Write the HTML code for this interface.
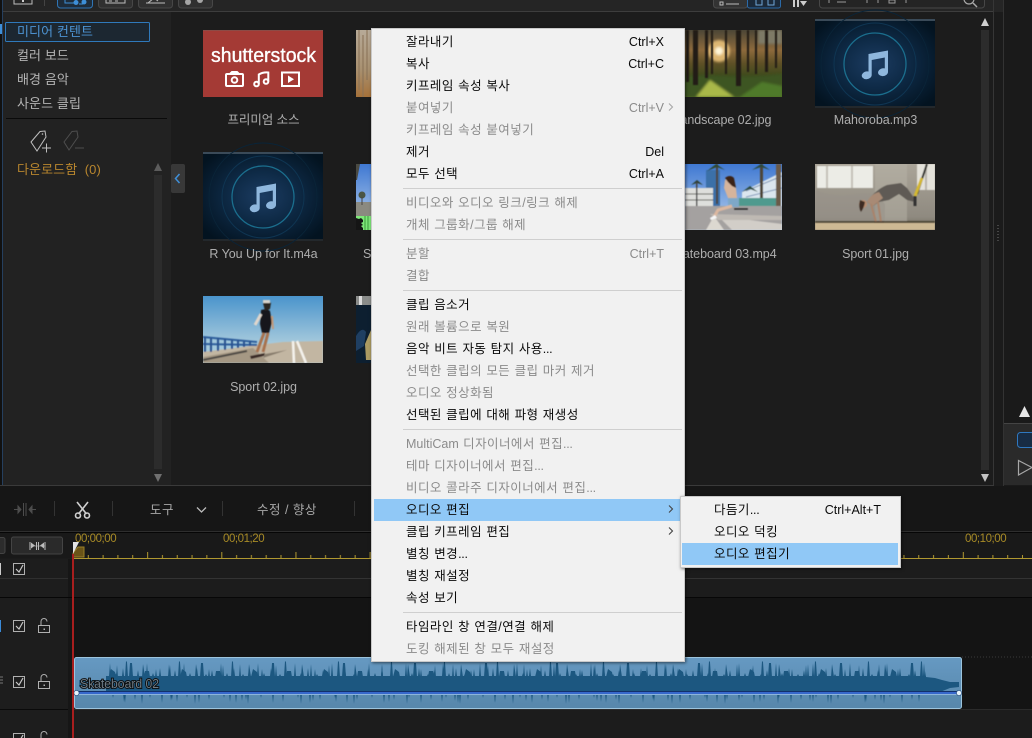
<!DOCTYPE html>
<html lang="ko"><head><meta charset="utf-8"><title>Editor</title>
<style>
html,body{margin:0;padding:0;background:#1b1b1b}
#p{position:relative;width:1032px;height:738px;overflow:hidden;font-family:"Liberation Sans","Noto Sans CJK KR",sans-serif}
svg.bg{position:absolute;left:0;top:0}
.t{position:absolute;white-space:nowrap;line-height:22px;height:22px}
.s{font-size:13px;color:#b4b4b4;left:17px;letter-spacing:.1px}
.l{font-size:12.5px;color:#aeaeae;text-align:center;width:153px;letter-spacing:-.05px}
.tl{font-size:12.5px;color:#a8a8a8;letter-spacing:.5px}
.ru{font-size:11.5px;color:#a88b26;letter-spacing:-.45px}
#menu{position:absolute;left:371px;top:28px;width:314px;height:634px;background:#f1f1f1;border:1px solid #c9c9c9;box-sizing:border-box;box-shadow:1px 1px 3px rgba(0,0,0,.55)}
#sub{position:absolute;left:680px;top:496px;width:221px;height:72px;background:#f1f1f1;border:1px solid #c9c9c9;box-sizing:border-box;box-shadow:1px 1px 3px rgba(0,0,0,.5)}
.m{position:absolute;left:371px;width:314px;height:22px;line-height:22px;font-size:12.5px;color:#0a0a0a;white-space:nowrap;letter-spacing:.45px;word-spacing:.4px}
.m span.a{position:absolute;left:35px}
.m span.b{position:absolute;right:21px;letter-spacing:0;word-spacing:0;font-size:12.5px}
.m i{font-style:normal;letter-spacing:-.3px}
.m i.n{letter-spacing:0}
.d{color:#8b8b8b}
.sep{position:absolute;left:403px;width:279px;height:1px;background:#cfcfcf}
.hl{position:absolute;background:#90c8f6}
.ar{position:absolute;left:667px;width:8px;height:22px}
</style></head><body><div id="p">
<svg class="bg" width="1032" height="738" viewBox="0 0 1032 738" xmlns="http://www.w3.org/2000/svg">
<defs>
<radialGradient id="mg" cx="50%" cy="50%" r="62%"><stop offset="0" stop-color="#1c3c62"/><stop offset=".45" stop-color="#0e2a46"/><stop offset="1" stop-color="#031320"/></radialGradient>
<linearGradient id="sky" x1="0" y1="0" x2="0" y2="1"><stop offset="0" stop-color="#4a94cc"/><stop offset=".7" stop-color="#a5c9dc"/></linearGradient>
<linearGradient id="sky2" x1="0" y1="0" x2="0" y2="1"><stop offset="0" stop-color="#3f78d2"/><stop offset="1" stop-color="#bcd4ee"/></linearGradient>
<linearGradient id="for" x1="0" y1="0" x2="0" y2="1"><stop offset="0" stop-color="#4c4636"/><stop offset=".3" stop-color="#8d6a3c"/><stop offset=".5" stop-color="#5e5026"/><stop offset=".7" stop-color="#3c4a1c"/><stop offset="1" stop-color="#4f6a22"/></linearGradient>
<linearGradient id="wood" x1="0" y1="0" x2="0" y2="1"><stop offset="0" stop-color="#b7aa98"/><stop offset=".6" stop-color="#a8906f"/><stop offset="1" stop-color="#a5713a"/></linearGradient>
<linearGradient id="wall" x1="0" y1="0" x2="0" y2="1"><stop offset="0" stop-color="#aaa498"/><stop offset=".8" stop-color="#8f8a80"/><stop offset="1" stop-color="#6c665a"/></linearGradient>
<linearGradient id="clip" x1="0" y1="0" x2="0" y2="1"><stop offset="0" stop-color="#6699c2"/><stop offset="1" stop-color="#5787ab"/></linearGradient>
<filter id="bl" x="-5%" y="-5%" width="110%" height="110%"><feGaussianBlur stdDeviation=".5"/></filter>
<filter id="bl2" x="-5%" y="-5%" width="110%" height="110%"><feGaussianBlur stdDeviation="1.2"/></filter>
<g id="note"><path d="M-6.500 -11 L13 -14.500 V7 A5 3.900 -10 1 1 9.800 3.400 V-7.500 L-3.300 -5 V10 A5 3.900 -10 1 1 -6.500 6.500 Z" fill="#8fb7dd"/></g>
<g id="music"><rect width="120" height="89" fill="url(#mg)"/><rect width="120" height="2" fill="#3a4a58"/><rect y="87" width="120" height="2" fill="#23282c"/>
<circle cx="60" cy="45" r="31" fill="none" stroke="#1b6f8e" stroke-width="1.300"/><circle cx="60" cy="45" r="41" fill="none" stroke="#0f3552" stroke-width="1"/><circle cx="60" cy="45" r="54" fill="none" stroke="#0a2438" stroke-width="1"/>
<use href="#note" x="60" y="46"/></g>
<pattern id="tick" x="73" y="552" width="74.15" height="7" patternUnits="userSpaceOnUse"><g fill="#b09830"><rect x="0" y="0" width="1" height="7"/><rect x="14.800" y="3" width="1" height="4"/><rect x="29.600" y="3" width="1" height="4"/><rect x="44.400" y="3" width="1" height="4"/><rect x="59.200" y="3" width="1" height="4"/></g></pattern>
<pattern id="w1" x="106" y="655" width="37" height="55" patternUnits="userSpaceOnUse"><path d="M0 21H3L4 8 5 21H9L10 18 11 21H16L17 13 18 21H25L26 19 27 21H31L32 15 33 21H37V38H30L29 45 28 38H20L19 48 18 38H8L7 43 6 38H0Z" fill="#1c5780"/></pattern>
<pattern id="w2" x="111" y="655" width="53" height="55" patternUnits="userSpaceOnUse"><path d="M5 22L6 10 7 22ZM14 22L15 6 16 7 17 22ZM31 22L32 9 34 22ZM44 22L45 14 46 22ZM12 38L13 47 14 38ZM30 38L31 49 32 38Z" fill="#1c5780"/></pattern>
<pattern id="w3" x="120" y="655" width="71" height="55" patternUnits="userSpaceOnUse"><path d="M9 22L10 8 12 8 13 22ZM24 22L25 16 29 16 30 22ZM48 22L49 9 50 22ZM60 22L62 14 66 17 67 22ZM50 38L51 46 52 38Z" fill="#1c5780"/></pattern>
</defs>

<rect width="1032" height="738" fill="#1b1b1b"/>
<!-- top bar -->
<rect width="1032" height="12" fill="#252525"/>
<rect y="11" width="994" height="1" fill="#3d3d3d"/>
<rect x="3" y="12" width="168" height="473" fill="#222"/>
<rect x="171" y="12" width="822" height="473" fill="#1c1c1c"/>
<rect x="0" y="0" width="2" height="486" fill="#111"/><rect x="2" y="0" width="1" height="486" fill="#253f5e"/>
<rect x="0" y="24" width="2" height="10" fill="#3f8fd8"/>
<rect x="14" y="-3" width="18" height="7" fill="none" stroke="#bdbdbd"/><rect x="22" y="0" width="2" height="2" fill="#ccc"/>
<rect x="44" y="0" width="1" height="6" fill="#444"/>
<rect x="57.500" y="-5" width="35" height="13" rx="3" fill="#1e2c3a" stroke="#2f75b5"/>
<path d="M65-1V3H73M71 3h3M79 4h4" stroke="#3d8fd8" stroke-width="1" fill="none"/><circle cx="76" cy="2.500" r="2.500" fill="#3d8fd8"/><circle cx="84" cy="2" r="2.500" fill="#3d8fd8"/>
<rect x="98.500" y="-5" width="34" height="13" rx="3" fill="#303030" stroke="#474747"/><path d="M106 0V3H125V0M109 1h3M115 1h3" stroke="#bbb" fill="none"/>
<rect x="138.500" y="-5" width="34" height="13" rx="3" fill="#303030" stroke="#474747"/><path d="M146 3H165M148 3L154 -2 158 1" stroke="#bbb" fill="none"/>
<rect x="178.500" y="-5" width="34" height="13" rx="3" fill="#303030" stroke="#474747"/><circle cx="188" cy="2" r="3" fill="#a5a5a5"/><circle cx="200" cy="0" r="3" fill="#a5a5a5"/>
<rect x="713.500" y="-5" width="34" height="13" rx="3" fill="#333" stroke="#4a4a4a"/><path d="M720 2h3v3h-3zM726 4h13" stroke="#bbb" fill="none"/>
<rect x="747.500" y="-5" width="33" height="13" rx="2" fill="#1b2a3a" stroke="#2b6aa8"/><path d="M756-1V5H762V-1M768-1V5H774V-1" stroke="#6fa7d8" fill="none"/>
<path d="M793 -1h2v8h-2zM797 -1h2v8h-2z" fill="#ccc"/><path d="M800 1h7l-3.500 5z" fill="#ccc"/>
<rect x="819.500" y="-5" width="165" height="13" rx="3" fill="#242424" stroke="#474747"/>
<path d="M829 0V3M837 2H846M867 0v3M878 0v3M889 0h6v3h-6zM906 0v3" stroke="#999" fill="none"/>
<circle cx="969" cy="-1" r="5" fill="none" stroke="#aaa" stroke-width="1.200"/><path d="M973 3l4 4" stroke="#aaa" stroke-width="1.500"/>

<!-- sidebar -->
<rect x="5.500" y="22.500" width="144" height="19" rx="1" fill="#1c2731" stroke="#2f79bb"/>
<rect x="6" y="118" width="161" height="1" fill="#0a0a0a"/>
<path d="M31 142L40 131.500 45 131 46 137 37 151Z" fill="none" stroke="#c0c0c0" stroke-width="1"/><circle cx="42.500" cy="134" r=".8" fill="#c0c0c0"/><path d="M42 148H51M46.500 143.500V152.500" stroke="#c0c0c0"/>
<path d="M64 142L72 131.500 77 131 78 137 69 150Z" fill="none" stroke="#4e4e4e" stroke-width="1"/><path d="M75 148H84" stroke="#4e4e4e"/>
<rect x="154" y="175" width="8" height="294" fill="#2c2c2c"/>
<path d="M154 171L158 163 162 171Z" fill="#5c5c5c"/><path d="M154 474L158 482 162 474Z" fill="#707070"/>
<rect x="171" y="164" width="14" height="29" rx="2" fill="#383838"/><path d="M179.500 174L175.500 178.500 179.500 183" stroke="#3f8fd8" stroke-width="1.500" fill="none"/>

<!-- grid scrollbar -->
<rect x="981" y="30" width="8" height="440" fill="#2c2c2c"/>
<path d="M981 26L985 18 989 26Z" fill="#cfcfcf"/><path d="M981 474L985 482 989 474Z" fill="#c2c2c2"/>
<rect x="993" y="0" width="1" height="485" fill="#363636"/><rect x="0" y="485" width="994" height="1" fill="#3a3a3a"/>
<path d="M998 225v1M998 228v1M998 231v1M998 234v1M998 237v1M998 240v1" stroke="#555" stroke-width="1.500"/>
<rect x="1003" y="0" width="29" height="486" fill="#1a1a1a"/><rect x="1003" y="0" width="1" height="486" fill="#333"/>
<rect x="1004" y="423" width="28" height="62" fill="#2a2a2a"/><rect x="1004" y="423" width="28" height="1" fill="#444"/>
<path d="M1019 417L1024.500 406 1030 417Z" fill="#e6e6e6"/>
<rect x="1017.500" y="432.500" width="20" height="15" rx="3" fill="#182c44" stroke="#2f78c0"/>
<path d="M1018.500 460.500L1032 467.500 1018.500 475Z" fill="none" stroke="#a8a8a8" stroke-width="1.200"/>
<path d="M893 491v1M897 491v1M901 491v1M905 491v1M909 491v1" stroke="#555" stroke-width="1.500"/>

<!-- thumbnails -->
<svg x="203" y="30" width="120" height="67" viewBox="0 0 120 67"><rect width="120" height="67" fill="#a43a35"/><rect width="120" height="1" fill="#8c4b46"/>
<text x="8" y="32" font-family="Liberation Sans" font-size="20" fill="#fff" stroke="#fff" stroke-width=".35" textLength="105" lengthAdjust="spacingAndGlyphs">shutterstock</text>
<g fill="none" stroke="#fff" stroke-width="2"><rect x="23" y="44" width="17" height="12" rx="1"/><circle cx="31.500" cy="50" r="2.800"/><path d="M27 44l2-2h5l2 2"/>
<circle cx="53.500" cy="54" r="2.300"/><circle cx="63" cy="51.500" r="2.300"/><path d="M55.800 54V44.500Q60 42 65.300 42.500V51.500"/>
<rect x="79" y="42.500" width="17" height="13.500"/></g><path d="M85 45.500L91 49.200 85 53Z" fill="#fff"/></svg>

<use href="#music" x="203" y="152"/>
<use href="#music" x="815" y="19"/>

<svg x="356" y="30" width="15" height="67"><rect width="15" height="67" fill="url(#wood)"/><path d="M3 0V60M7 5V67M11 0V50" stroke="#8a7358" stroke-width="1.500" opacity=".7"/></svg>
<svg x="356" y="164" width="15" height="66"><rect width="15" height="66" fill="url(#sky2)"/><rect y="38" width="15" height="18" fill="#8b8a80"/><circle cx="6" cy="31" r="3.500" fill="#4a5544"/><rect x="5.500" y="33" width="1" height="8" fill="#444"/><path d="M0 0h4L1 16H0Z" fill="#4a4a42"/>
<rect y="52" width="15" height="14" fill="#7fe87a"/><path d="M0 54l3 1 2-1 2 2v2l-2 1 2 2-2 1 2 2v2H0Z" fill="#151515"/><path d="M9 52v14M12 52v14" stroke="#3a9a3a"/></svg>
<svg x="356" y="296" width="15" height="67"><rect width="15" height="67" fill="#0d1f30"/><rect width="15" height="9" fill="#8a8c8a"/><rect x="3" width="3" height="9" fill="#dcdcdc"/><path d="M15 34L9 48 10 64H15Z" fill="#ac9b62"/><path d="M0 40Q6 30 10 36L8 50 0 55Z" fill="#1f3f62"/></svg>

<!-- forest -->
<svg x="662" y="30" width="120" height="67" viewBox="0 0 120 67"><rect width="120" height="67" fill="url(#for)"/>
<g filter="url(#bl2)"><circle cx="57" cy="21" r="11" fill="#e8c078" opacity=".9"/><circle cx="57" cy="21" r="4" fill="#fff6d8"/><path d="M0 50Q30 44 60 46T120 44V67H0Z" fill="#3e5520"/><path d="M34 67L48 50 72 67Z" fill="#a9b84a"/><path d="M78 67L100 52 120 56V67Z" fill="#4f7a2c"/><rect x="96" y="0" width="24" height="14" fill="#7e7a66"/></g>
<g filter="url(#bl)" fill="#211a12"><rect x="31" y="0" width="5" height="55"/><rect x="43" y="0" width="3" height="48"/><rect x="49" y="0" width="2" height="44"/><rect x="63" y="0" width="2" height="44"/><rect x="74" y="0" width="5" height="56"/><rect x="85" y="0" width="2" height="42"/><rect x="93" y="0" width="2" height="44"/><rect x="103" y="0" width="3" height="42"/><rect x="113" y="0" width="2" height="38"/><rect x="24" y="0" width="3" height="52"/></g></svg>

<!-- skateboard 03 -->
<svg x="662" y="164" width="120" height="66" viewBox="0 0 120 66"><rect width="120" height="66" fill="url(#sky2)"/>
<g filter="url(#bl)"><path d="M80 28L120 8V42H80Z" fill="#dbe6ee"/><path d="M84 27L120 12M84 33L120 24" stroke="#8098b8"/><rect x="44" y="6" width="14" height="38" fill="#3b6fa8"/><rect x="23" y="24" width="28" height="20" fill="#dedfdc"/><path d="M23 30H51M23 36H51" stroke="#5a5a55"/>
<rect x="54" y="0" width="2" height="40" fill="#4e4438"/><path d="M45 7L54 0 63 6 55 3Z" fill="#2e4a34"/><path d="M29 21L35 16 41 21 35 19Z" fill="#2c4034"/><rect x="34" y="18" width="1.500" height="26" fill="#444"/>
<rect x="98" y="0" width="3" height="44" fill="#4e4438"/><path d="M80 28L88 22 96 28 88 25Z" fill="#2c4a3c"/><path d="M90 6L99 0 108 6 99 3Z" fill="#2c4a3c"/><path d="M76 34H114V42H76Z" fill="#4f9a8e"/><rect x="114" y="0" width="5" height="44" fill="#6b5a48"/>
<path d="M23 42H120V66H23Z" fill="#a4a1a0"/><path d="M56 52L120 60V66H70Z" fill="#d2cec8"/><path d="M48 50L120 52V56L56 56Z" fill="#beb9b3"/><path d="M44 66L52 52 62 66Z" fill="#dcd8d0"/>
<path d="M63 16Q68 13 71 18L74 24 75 34 66 34 62 24Z" fill="#d6b49c"/><path d="M63 14Q68 10 72 14L74 24 70 22 66 18Z" fill="#3a2418"/><rect x="66" y="34" width="11" height="9" fill="#7ea8c8"/><path d="M70 42L56 46 52 53" stroke="#dcb8a0" stroke-width="3" fill="none"/><path d="M48 54L53 51 55 54 49 56Z" fill="#f6f6f6"/><rect x="72" y="44" width="14" height="2" fill="#2c2c2c"/></g></svg>

<!-- sport 01 -->
<svg x="815" y="164" width="120" height="66" viewBox="0 0 120 66"><rect width="120" height="66" fill="url(#wall)"/>
<g filter="url(#bl)"><rect x="2" y="2" width="56" height="22" fill="#ecece6"/><path d="M12 2V24M37 2V24" stroke="#c4c0b6" stroke-width="2"/><rect x="102" y="0" width="18" height="26" fill="#e4e2da"/><path d="M111 0V26" stroke="#b8b4aa" stroke-width="2"/><rect x="60" y="0" width="32" height="58" fill="#b8b3a8" opacity=".5"/>
<path d="M0 26Q20 34 40 30T70 40V57H0Z" fill="#98928a" opacity=".6"/><rect y="58" width="120" height="8" fill="#cdb994"/><rect y="57" width="120" height="2" fill="#4e4636"/>
<path d="M52 38Q60 26 72 21L86 19 92 24 99 34 100 38 92 36 84 30 74 36 64 38 58 42Z" fill="#5f5a54"/><path d="M52 38Q56 30 64 28L68 34 58 42Z" fill="#a88a74"/><circle cx="48" cy="40" r="4" fill="#b88c70"/><path d="M45 36Q43 44 46 48 49 44 50 38Z" fill="#3e2c20"/><path d="M56 40L61 58M63 38L66 58" stroke="#a9836a" stroke-width="2" fill="none"/><path d="M59 58H69" stroke="#4a3a2c" stroke-width="1.500"/>
<path d="M112 0L102 30" stroke="#2c2c26" stroke-width="2"/><path d="M107 14L100 32" stroke="#d4b830" stroke-width="3"/><path d="M100 32L100 42" stroke="#333" stroke-width="3"/></g></svg>

<!-- sport 02 -->
<svg x="203" y="296" width="120" height="67" viewBox="0 0 120 67"><rect width="120" height="67" fill="url(#sky)"/>
<g filter="url(#bl)"><path d="M0 56L55 49 80 46 120 45V67H0Z" fill="#c2b6a2"/><path d="M0 67V61L50 52 66 67Z" fill="#a59884"/><path d="M0 64L44 55" stroke="#4e4a44" stroke-width="2"/>
<path d="M0 41L54 46M0 48L54 49" stroke="#2f5e9c" stroke-width="2"/><path d="M2 41V56M8 42V56M15 42V55M22 43V54M29 44V53M35 44V52M41 45V51M47 45V50" stroke="#2a5290" stroke-width="2"/>
<path d="M90 45L91 67M94 45L103 67" stroke="#f4f2ec" stroke-width="2.500"/>
<path d="M58 14Q64 12 67 15L69 26 66 37 59 37 57 28Z" fill="#12161c"/><path d="M60 7Q64 3 68 7L67 13 62 15Z" fill="#2a2622"/><rect x="60" y="4" width="7" height="3" fill="#d9d4cc"/><path d="M58 18L52 29" stroke="#e0d6cc" stroke-width="3"/><path d="M69 20L70 33" stroke="#c29a7c" stroke-width="2"/><path d="M61 37L54 56M65 37L60 56" stroke="#a8724e" stroke-width="3"/><path d="M47 60L62 57 61 60 48 63Z" fill="#3a2a26"/><path d="M62 58L84 54 60 62Z" fill="#6e6456" opacity=".7"/></g></svg>

<!-- timeline -->
<rect x="0" y="486" width="1032" height="45" fill="#161616"/>
<rect x="0" y="531" width="1032" height="1" fill="#2e2e2e"/><rect y="532" width="1032" height="1" fill="#060606"/>
<path d="M14 509.500h4M18 506l3 3.500-3 3.500zM36 509.500h-4M32 506l-3 3.500 3 3.500zM23.500 503v13M26 503v13" stroke="#4d4d4d" fill="#4d4d4d"/>
<g fill="#333"><rect x="54" y="501" width="1" height="15"/><rect x="112" y="501" width="1" height="15"/><rect x="222" y="501" width="1" height="15"/><rect x="354" y="501" width="1" height="15"/></g>
<g fill="none" stroke="#cfcfcf" stroke-width="1.600"><path d="M77 502L86.500 514M88 502L78.500 514"/><circle cx="78" cy="515.500" r="2.500"/><circle cx="87" cy="515.500" r="2.500"/></g>
<path d="M197 507.500L201.500 512 206 507.500" stroke="#bdbdbd" stroke-width="1.300" fill="none"/>
<rect y="533" width="1032" height="25" fill="#191919"/>
<rect x="-6" y="537.500" width="11" height="16" rx="2" fill="#2c2c2c" stroke="#444"/>
<rect x="11.500" y="537" width="51" height="17" rx="2" fill="#2a2a2a" stroke="#444"/>
<path d="M30 542v8M45 542v8M36.500 542v8M38.500 542v8" stroke="#bdbdbd"/><path d="M31 542.500l4 3-4 3zM44 542.500l-4 3 4 3z" fill="#bdbdbd"/><path d="M31 546h14" stroke="#bdbdbd" stroke-width=".6"/>
<rect x="73" y="552" width="959" height="7" fill="url(#tick)"/>
<rect x="73" y="558" width="959" height="1" fill="#b09830"/>
<path d="M73 557V553L78 547H84V557Z" fill="#6a5418" stroke="#9a7f28"/><path d="M73 542H79L73 554Z" fill="#e4e4e4"/>
<!-- track area -->
<rect x="0" y="559" width="1032" height="179" fill="#1a1a1a"/>
<rect x="0" y="559" width="68" height="179" fill="#1d1d1d"/>
<rect x="68" y="559" width="4" height="179" fill="#161616"/>
<rect x="73" y="559" width="959" height="38" fill="#1c1c1c"/>
<rect x="0" y="578" width="68" height="1" fill="#2f2f2f"/><rect x="73" y="578" width="959" height="1" fill="#333"/>
<rect x="0" y="597" width="1032" height="1" fill="#070707"/>
<rect x="73" y="598" width="959" height="111" fill="#141414"/>
<rect x="0" y="709" width="68" height="1" fill="#0a0a0a"/><rect x="73" y="710" width="959" height="28" fill="#1c1c1c"/><rect x="73" y="709" width="959" height="1" fill="#2b2b2b"/>
<rect x="0" y="563" width="1" height="12" fill="#ccc"/><rect x="0" y="620" width="1" height="12" fill="#3a8ad8"/>
<path d="M0 677h3M0 680h3M0 683h3" stroke="#777"/>
<g><rect x="13.500" y="563.500" width="11" height="11" fill="none" stroke="#b0b0b0"/><path d="M16 569l3 3 4-7" stroke="#c8c8c8" fill="none" stroke-width="1.200"/></g>
<g fill="none" stroke="#b0b0b0"><rect x="13.500" y="620.500" width="11" height="11"/><rect x="13.500" y="676.500" width="11" height="11"/><rect x="13.500" y="733.500" width="11" height="11"/>
<path d="M16 626l3 3 4-7M16 682l3 3 4-7M16 739l3 3 4-7" stroke="#c8c8c8" stroke-width="1.200"/>
<rect x="38.500" y="625.500" width="11" height="7"/><path d="M41 625.500v-4a3 3 0 0 1 6 0"/><rect x="38.500" y="681.500" width="11" height="7"/><path d="M41 681.500v-4a3 3 0 0 1 6 0"/><rect x="38.500" y="738.500" width="11" height="7"/><path d="M41 738.500v-4a3 3 0 0 1 6 0"/></g>
<rect x="43.500" y="628.500" width="1.500" height="1.500" fill="#b0b0b0"/><rect x="43.500" y="684.500" width="1.500" height="1.500" fill="#b0b0b0"/>
<path d="M962 657H1032" stroke="#3a3a3a" stroke-dasharray="1 2"/>
<!-- clip -->
<rect x="74.500" y="657.500" width="887" height="51" rx="2" fill="url(#clip)" stroke="#9cc4dd"/>
<rect x="79" y="680" width="28" height="7" fill="#1c5780" opacity=".7"/>
<rect x="106" y="677" width="820" height="16" fill="#1c5780"/>
<path d="M926 677L935 678 942 680 950 682 959 682 959 687 950 688 940 692 926 692Z" fill="#1c5780"/>
<rect x="106" y="655" width="820" height="55" fill="url(#w1)"/>
<rect x="106" y="655" width="820" height="55" fill="url(#w2)"/>
<rect x="106" y="655" width="820" height="55" fill="url(#w3)"/>
<rect x="76" y="692" width="883" height="2" fill="#3768cc"/><rect x="76" y="691" width="883" height="1" fill="#13306a"/><rect x="76" y="694" width="883" height="1" fill="#8db4da"/>
<circle cx="76.500" cy="693" r="2.600" fill="#e6f3fb" stroke="#2a4f80" stroke-width=".7"/><circle cx="959" cy="693" r="2.600" fill="#e6f3fb" stroke="#2a4f80" stroke-width=".7"/>
<rect x="72" y="554" width="2" height="184" fill="#a81e1e"/>
<text x="80" y="688" font-family="Liberation Sans" font-size="12.500" fill="#6f7c86" stroke="#0b0b0b" stroke-width="1.800" paint-order="stroke" textLength="79" lengthAdjust="spacingAndGlyphs">Skateboard 02</text>
</svg>

<!-- sidebar text -->
<div class="t s" style="top:21px;color:#4d93d2">미디어 컨텐트</div>
<div class="t s" style="top:45px">컬러 보드</div>
<div class="t s" style="top:69px">배경 음악</div>
<div class="t s" style="top:93px">사운드 클립</div>
<div class="t s" style="top:159px;color:#b8862e">다운로드함&nbsp; (0)</div>
<!-- labels -->
<div class="t l" style="left:187px;top:109px">프리미엄 소스</div>
<div class="t l" style="left:187px;top:243px">R You Up for It.m4a</div>
<div class="t l" style="left:187px;top:376px">Sport 02.jpg</div>
<div class="t l" style="left:799px;top:109px">Mahoroba.mp3</div>
<div class="t l" style="left:799px;top:243px">Sport 01.jpg</div>
<div class="t l" style="left:646px;top:109px">Landscape 02.jpg</div>
<div class="t l" style="left:646px;top:243px">Skateboard 03.mp4</div>
<div class="t l" style="left:363px;top:243px;width:20px;text-align:left">S</div>
<!-- toolbar -->
<div class="t tl" style="left:150px;top:499px">도구</div>
<div class="t tl" style="left:257px;top:499px">수정 / 향상</div>
<div class="t ru" style="left:75px;top:528px">00;00;00</div>
<div class="t ru" style="left:223px;top:528px">00;01;20</div>
<div class="t ru" style="left:965px;top:528px">00;10;00</div>

<!-- menu -->
<div id="menu"></div>
<div class="hl" style="left:374px;top:499px;width:308px;height:22px"></div>
<div class="sep" style="top:188px"></div><div class="sep" style="top:239px"></div><div class="sep" style="top:290px"></div><div class="sep" style="top:429px"></div><div class="sep" style="top:612px"></div>
<div class="m" style="top:31px"><span class="a">잘라내기</span><span class="b">Ctrl+X</span></div>
<div class="m" style="top:53px"><span class="a">복사</span><span class="b">Ctrl+C</span></div>
<div class="m" style="top:75px"><span class="a">키프레임 속성 복사</span></div>
<div class="m d" style="top:97px"><span class="a">붙여넣기</span><span class="b">Ctrl+V</span></div>
<div class="m d" style="top:119px"><span class="a">키프레임 속성 붙여넣기</span></div>
<div class="m" style="top:141px"><span class="a">제거</span><span class="b">Del</span></div>
<div class="m" style="top:163px"><span class="a">모두 선택</span><span class="b">Ctrl+A</span></div>
<div class="m d" style="top:192px"><span class="a">비디오와 오디오 링크/링크 해제</span></div>
<div class="m d" style="top:214px"><span class="a">개체 그룹화/그룹 해제</span></div>
<div class="m d" style="top:243px"><span class="a">분할</span><span class="b">Ctrl+T</span></div>
<div class="m d" style="top:265px"><span class="a">결합</span></div>
<div class="m" style="top:294px"><span class="a">클립 음소거</span></div>
<div class="m d" style="top:316px"><span class="a">원래 볼륨으로 복원</span></div>
<div class="m" style="top:338px"><span class="a">음악 비트 자동 탐지 사용<i>...</i></span></div>
<div class="m d" style="top:360px"><span class="a">선택한 클립의 모든 클립 마커 제거</span></div>
<div class="m d" style="top:382px"><span class="a">오디오 정상화됨</span></div>
<div class="m" style="top:404px"><span class="a">선택된 클립에 대해 파형 재생성</span></div>
<div class="m d" style="top:433px"><span class="a"><i class="n">MultiCam</i> 디자이너에서 편집<i>...</i></span></div>
<div class="m d" style="top:455px"><span class="a">테마 디자이너에서 편집<i>...</i></span></div>
<div class="m d" style="top:477px"><span class="a">비디오 콜라주 디자이너에서 편집<i>...</i></span></div>
<div class="m" style="top:499px"><span class="a">오디오 편집</span></div>
<div class="m" style="top:521px"><span class="a">클립 키프레임 편집</span></div>
<div class="m" style="top:543px"><span class="a">별칭 변경<i>...</i></span></div>
<div class="m" style="top:565px"><span class="a">별칭 재설정</span></div>
<div class="m" style="top:587px"><span class="a">속성 보기</span></div>
<div class="m" style="top:616px"><span class="a">타임라인 창 연결/연결 해제</span></div>
<div class="m d" style="top:638px"><span class="a">도킹 해제된 창 모두 재설정</span></div>
<svg class="ar" style="top:96px" viewBox="0 0 8 22"><path d="M2 7.500L5.500 11 2 14.500" fill="none" stroke="#a8a8a8" stroke-width="1.100"/></svg>
<svg class="ar" style="top:498px" viewBox="0 0 8 22"><path d="M2 7.500L5.500 11 2 14.500" fill="none" stroke="#444" stroke-width="1.100"/></svg>
<svg class="ar" style="top:520px" viewBox="0 0 8 22"><path d="M2 7.500L5.500 11 2 14.500" fill="none" stroke="#444" stroke-width="1.100"/></svg>
<!-- submenu -->
<div id="sub"></div>
<div class="hl" style="left:682px;top:543px;width:216px;height:22px"></div>
<div class="m" style="left:679px;top:499px;width:222px"><span class="a">다듬기<i>...</i></span><span class="b" style="right:20px">Ctrl+Alt+T</span></div>
<div class="m" style="left:679px;top:521px;width:222px"><span class="a">오디오 덕킹</span></div>
<div class="m" style="left:679px;top:543px;width:222px"><span class="a">오디오 편집기</span></div>
</div></body></html>
